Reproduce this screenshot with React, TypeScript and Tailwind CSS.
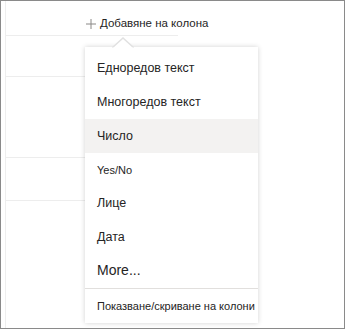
import React from "react";

const items = [
  { label: "Едноредов текст", cls: "text-[12.5px]" },
  { label: "Многоредов текст", cls: "text-[12.5px]" },
  { label: "Число", cls: "text-[12.5px]", active: true },
  { label: "Yes/No", cls: "text-[11px]" },
  { label: "Лице", cls: "text-[12.5px]" },
  { label: "Дата", cls: "text-[12.5px]" },
  { label: "More...", cls: "text-[14px]" },
];

export default function App() {
  return (
    <div
      className="relative w-[345px] h-[329px] bg-white border border-[#8a8a8a] overflow-hidden"
      style={{ fontFamily: '"Liberation Sans", Arial, sans-serif' }}
    >
      {/* background list */}
      <div className="flex h-full">
        <div className="w-[5px] border-r border-[#eeeeee]" />
        <div className="flex flex-col flex-1">
          <div className="h-[35px] w-[172px] border-b border-[#ededed]" />
          <div className="h-[41px] w-[80px] border-b border-[#ededed]" />
          <div className="h-[81px] w-[80px] border-b border-[#ededed]" />
          <div className="h-[43px] w-[80px] border-b border-[#ededed]" />
        </div>
      </div>

      {/* column header */}
      <div className="absolute left-[85px] top-[14px] flex items-center gap-[4px] text-[11.5px] text-[#252424]">
        <svg width="10" height="10" viewBox="0 0 10 10" className="text-[#8a8886]">
          <path d="M5 0v10M0 5h10" stroke="currentColor" strokeWidth="1" fill="none" />
        </svg>
        <span>Добавяне на колона</span>
      </div>

      {/* menu */}
      <div className="absolute left-[84px] top-[46px] w-[173px] bg-white shadow-[0_0_5px_rgba(0,0,0,0.18)]">
        <svg
          width="22"
          height="12"
          viewBox="0 0 22 12"
          className="absolute left-[27px] -top-[10px]"
        >
          <path d="M0 11 L11 1 L22 11" fill="white" stroke="#e1e1e1" strokeWidth="1.5" />
          <rect x="0" y="10.5" width="22" height="2" fill="white" />
        </svg>
        <div className="pt-[5px] flex flex-col">
          {items.map((it) => (
            <div
              key={it.label}
              className={`h-[33.7px] flex items-center px-[12px] text-[#252424] whitespace-nowrap ${it.cls} ${
                it.active ? "bg-[#f3f2f1]" : ""
              }`}
            >
              {it.label}
            </div>
          ))}
          <div className="h-px bg-[#e1dfdd]" />
          <div className="h-[34px] flex items-center pl-[12px] text-[11px] text-[#252424] whitespace-nowrap">
            Показване/скриване на колони
          </div>
        </div>
      </div>
    </div>
  );
}
